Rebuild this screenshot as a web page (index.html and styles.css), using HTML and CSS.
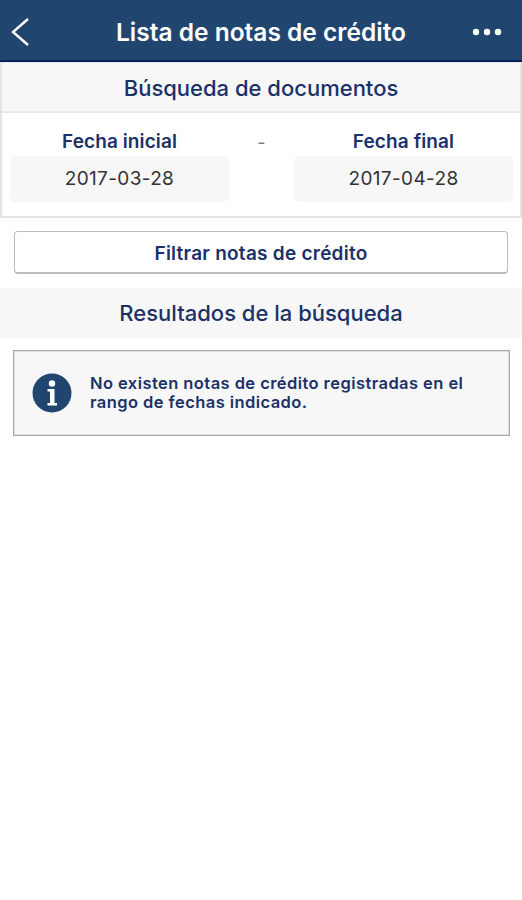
FILE: index.html
```html
<!DOCTYPE html>
<html lang="es">
	<head>
		<meta charset="UTF-8" />
		<meta name="viewport" content="width=device-width, initial-scale=1.0" />
		<title>Lista de notas de crédito</title>
		<link rel="stylesheet" href="styles.css">
	</head>
	<body>
		<header>
			<button class="back" aria-label="Volver">
				<svg width="18" height="28" viewBox="0 0 18 28"><path d="M17 1L2 14l15 13" /></svg>
			</button>
			<h1>Lista de notas de crédito</h1>
			<button class="more" aria-label="Más opciones">
				<svg width="30" height="8" viewBox="0 0 30 8">
					<circle cx="4" cy="4" r="3.2" />
					<circle cx="15" cy="4" r="3.2" />
					<circle cx="26" cy="4" r="3.2" />
				</svg>
			</button>
		</header>

		<section class="search">
			<h2>Búsqueda de documentos</h2>
			<div class="dates">
				<div class="field">
					<label>Fecha inicial</label>
					<div class="date">2017-03-28</div>
				</div>
				<span class="dash">-</span>
				<div class="field">
					<label>Fecha final</label>
					<div class="date">2017-04-28</div>
				</div>
			</div>
		</section>

		<button class="filter">Filtrar notas de crédito</button>

		<h2 class="results">Resultados de la búsqueda</h2>

		<div class="message">
			<svg width="40" height="40" viewBox="0 0 40 40">
				<circle cx="20" cy="20" r="19.5" />
				<path d="M15.500 16h7v14h2.500v2.500H15.500V30H18V18.500h-2.500z" />
				<circle class="dot" cx="20" cy="10.500" r="3.200" />
			</svg>
			<p>No existen notas de crédito registradas en el<br>rango de fechas indicado.</p>
		</div>
	</body>
</html>
```

FILE: styles.css
```css
* {
	padding: 0;
	margin: 0;
	box-sizing: border-box;
}

body {
	background: #fff;
	color: #1b3168;
	font-family: Inter, sans-serif;
}

button {
	border: none;
	background: none;
	font-family: inherit;
	color: inherit;
}

header {
	display: flex;
	align-items: center;
	justify-content: space-between;
	height: 62px;
	padding: 3px 20px 0 11px;
	border-bottom: 2px solid #07205f;
	background: #204670;
	color: #fff;
}

header button {
	display: flex;
	width: 30px;
}

h1 {
	margin-left: 9px;
	font-size: 24.5px;
	font-weight: 600;
}

.back path {
	fill: none;
	stroke: #fff;
	stroke-width: 2.4;
}

.more circle {
	fill: #fff;
}

.search {
	height: 156px;
	border: 2px solid #e4e4e4;
	border-top-width: 1px;
}

h2 {
	height: 50px;
	background: #f7f7f7;
	font-size: 22px;
	font-weight: 500;
	line-height: 50px;
	text-align: center;
}

.search h2 {
	border-bottom: 2px solid #e8e8e8;
}

.dates {
	display: flex;
	justify-content: space-between;
	padding: 17px 7px 0 8px;
}

.field {
	width: 219px;
	text-align: center;
}

label {
	display: block;
	font-size: 19px;
	font-weight: 600;
	letter-spacing: 0.1px;
	line-height: 24px;
}

.date {
	height: 46px;
	margin-top: 2px;
	border-radius: 5px;
	background: #f7f7f7;
	color: #333;
	font-size: 19px;
	letter-spacing: 0.35px;
	line-height: 45px;
}

.dash {
	color: #777;
	font-size: 18px;
	line-height: 25px;
}

.filter {
	display: block;
	width: 494px;
	height: 43px;
	margin: 13px 14px 14px;
	padding-top: 2px;
	border: 1px solid #bbb;
	border-bottom-width: 2px;
	border-radius: 4px;
	font-size: 19px;
	font-weight: 600;
	letter-spacing: 0.25px;
}

.message {
	display: flex;
	align-items: center;
	gap: 18px;
	height: 86px;
	margin: 12px 12px 0 13px;
	padding-left: 18px;
	border: 1px solid #aaa;
	background: #f7f7f7;
	box-shadow: inset 0 0 0 1px #ddd;
}

.message circle {
	fill: #204670;
}

.message path,
.message .dot {
	fill: #fff;
}

.message p {
	font-size: 16.5px;
	font-weight: 600;
	letter-spacing: 0.43px;
	line-height: 19.5px;
	white-space: nowrap;
}
```
